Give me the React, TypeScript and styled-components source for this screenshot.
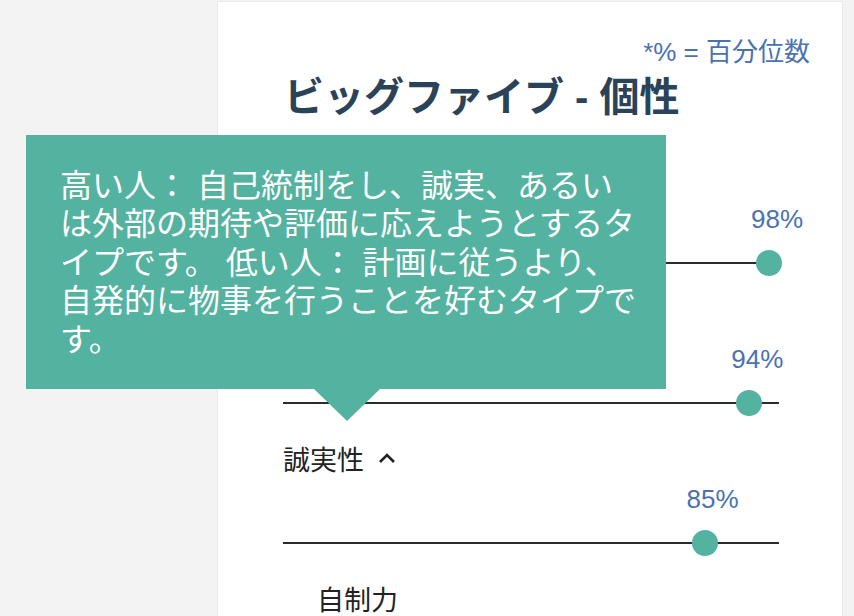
import styled, { createGlobalStyle } from 'styled-components';

const GlobalStyle = createGlobalStyle`
  html, body {
    margin: 0;
    padding: 0;
    background: #f3f3f3;
    font-family: 'Liberation Sans', 'Noto Sans CJK JP', sans-serif;
  }
`;

const TEAL = '#53b2a0';
const BLUE = '#4a72b0';

const Page = styled.div`
  position: relative;
  height: 616px;
  overflow: hidden;
  padding: 1px 11px 0 217px;
  box-sizing: border-box;
`;

const Card = styled.section`
  background: #fff;
  border: 1px solid #e9e9e9;
  min-height: 700px;
  padding: 35px 63px 0 65px;
`;

const Note = styled.div`
  margin-right: -31px;
  text-align: right;
  font-size: 26px;
  line-height: 30px;
  color: ${BLUE};
`;

const Title = styled.h1`
  margin: 6px 0 0 1px;
  font-size: 40px;
  line-height: 48px;
  font-weight: 700;
  color: #2b4358;
`;

const TraitList = styled.div`
  margin-top: 41px;
  display: flex;
  flex-direction: column;
`;

const LabelRow = styled.div<{ $indent?: boolean }>`
  display: flex;
  align-items: center;
  gap: 14px;
  height: 32px;
  padding-left: ${({ $indent }) => ($indent ? '34px' : '0')};
  font-size: 27px;
  color: #222;
`;

const Slider = styled.div`
  position: relative;
  padding-top: 10px;
  margin-bottom: 38px;
`;

const PctText = styled.div`
  position: absolute;
  top: 10px;
  transform: translateX(-50%);
  font-size: 26px;
  line-height: 30px;
  color: ${BLUE};
  white-space: nowrap;
`;

const Track = styled.div`
  position: relative;
  height: 2px;
  margin-top: 58px;
  background: #2b2b2b;
`;

const Thumb = styled.div`
  position: absolute;
  top: -12px;
  width: 26px;
  height: 26px;
  margin-left: -13px;
  border-radius: 50%;
  background: ${TEAL};
`;

const Tooltip = styled.div`
  position: absolute;
  left: 26px;
  top: 135px;
  width: 640px;
  box-sizing: border-box;
  padding: 32px 28px 30px 34px;
  background: ${TEAL};
  color: #fff;
  font-size: 32px;
  line-height: 1.2;
  line-break: strict;

  &::after {
    content: '';
    position: absolute;
    left: 288px;
    top: 100%;
    border-left: 33px solid transparent;
    border-right: 33px solid transparent;
    border-top: 32px solid ${TEAL};
  }
`;

const Chevron = () => (
  <svg width="18" height="12" viewBox="0 0 18 12" fill="none">
    <polyline points="2,10 9,3 16,10" stroke="#222" strokeWidth="2.6" />
  </svg>
);

interface Trait {
  label: string;
  pct: number;
  open?: boolean;
  facet?: boolean;
}

const traits: Trait[] = [
  { label: '開放性', pct: 98 },
  { label: '外向性', pct: 94 },
  { label: '誠実性', pct: 85, open: true },
  { label: '自制力', pct: 80, facet: true },
];

const TraitRow = ({ trait }: { trait: Trait }) => (
  <div>
    <LabelRow $indent={trait.facet}>
      <span>{trait.label}</span>
      {trait.open && <Chevron />}
    </LabelRow>
    <Slider>
      <PctText style={{ left: `calc(${trait.pct}% + 8px)` }}>{trait.pct}%</PctText>
      <Track>
        <Thumb style={{ left: `${trait.pct}%` }} />
      </Track>
    </Slider>
  </div>
);

export default function App() {
  return (
    <>
      <GlobalStyle />
      <Page>
        <Card>
          <Note>*% = 百分位数</Note>
          <Title>ビッグファイブ - 個性</Title>
          <TraitList>
            {traits.map((t) => (
              <TraitRow key={t.label} trait={t} />
            ))}
          </TraitList>
        </Card>
        <Tooltip>
          高い人： 自己統制をし、誠実、あるいは外部の期待や評価に応えようとするタイプです。 低い人： 計画に従うより、自発的に物事を行うことを好むタイプです。
        </Tooltip>
      </Page>
    </>
  );
}
